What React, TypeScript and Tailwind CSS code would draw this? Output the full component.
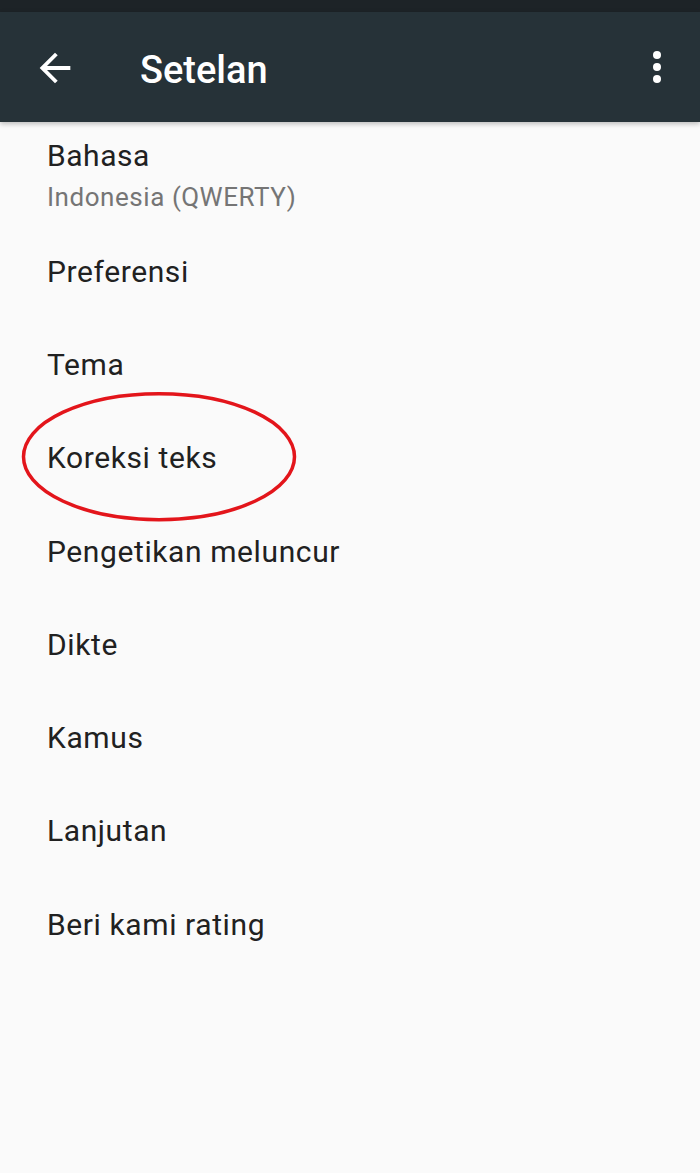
import React from "react";

const items = [
  "Preferensi",
  "Tema",
  "Koreksi teks",
  "Pengetikan meluncur",
  "Dikte",
  "Kamus",
  "Lanjutan",
  "Beri kami rating",
];

export default function App() {
  return (
    <div
      className="relative w-[700px] h-[1173px] bg-[#fafafa] overflow-hidden"
      style={{ fontFamily: "Roboto, 'Noto Sans', sans-serif" }}
    >
      <div className="h-[12px] bg-[#1d2327]" />
      <div className="relative z-10 h-[110px] bg-[#263238] flex items-center shadow-[0_2px_5px_rgba(0,0,0,0.25)]">
        <svg
          viewBox="0 0 24 24"
          className="w-[46px] h-[46px] ml-[32px] mt-[2px] shrink-0"
          fill="#ffffff"
        >
          <path d="M20 11H7.83l5.59-5.59L12 4l-8 8 8 8 1.41-1.41L7.83 13H20v-2z" />
        </svg>
        <div className="ml-[62px] mt-[6px] text-[38px] leading-[44px] font-medium text-white">
          Setelan
        </div>
        <svg
          viewBox="0 0 24 24"
          className="w-[48px] h-[48px] ml-auto mr-[19px] shrink-0"
          fill="#ffffff"
        >
          <circle cx="12" cy="6" r="2" />
          <circle cx="12" cy="12" r="2" />
          <circle cx="12" cy="18" r="2" />
        </svg>
      </div>

      <div className="flex flex-col">
        <div className="pl-[47px] pt-[15.5px] pb-[12.5px]">
          <div className="text-[30px] leading-[36px] tracking-[0.55px] text-[#212121]">
            Bahasa
          </div>
          <div className="mt-[7px] text-[26px] leading-[32px] tracking-[0.55px] text-[#757575]">
            Indonesia (QWERTY)
          </div>
        </div>
        {items.map((t) => (
          <div key={t} className="h-[93.3px] flex items-center pl-[47px]">
            <div className="text-[30px] leading-[36px] tracking-[0.6px] text-[#212121]">
              {t}
            </div>
          </div>
        ))}
      </div>

      <svg
        className="absolute left-0 top-0 pointer-events-none"
        width="700"
        height="1173"
        viewBox="0 0 700 1173"
      >
        <ellipse
          cx="159"
          cy="456.7"
          rx="135.5"
          ry="63"
          fill="none"
          stroke="#e3151b"
          strokeWidth="3.5"
        />
      </svg>
    </div>
  );
}
